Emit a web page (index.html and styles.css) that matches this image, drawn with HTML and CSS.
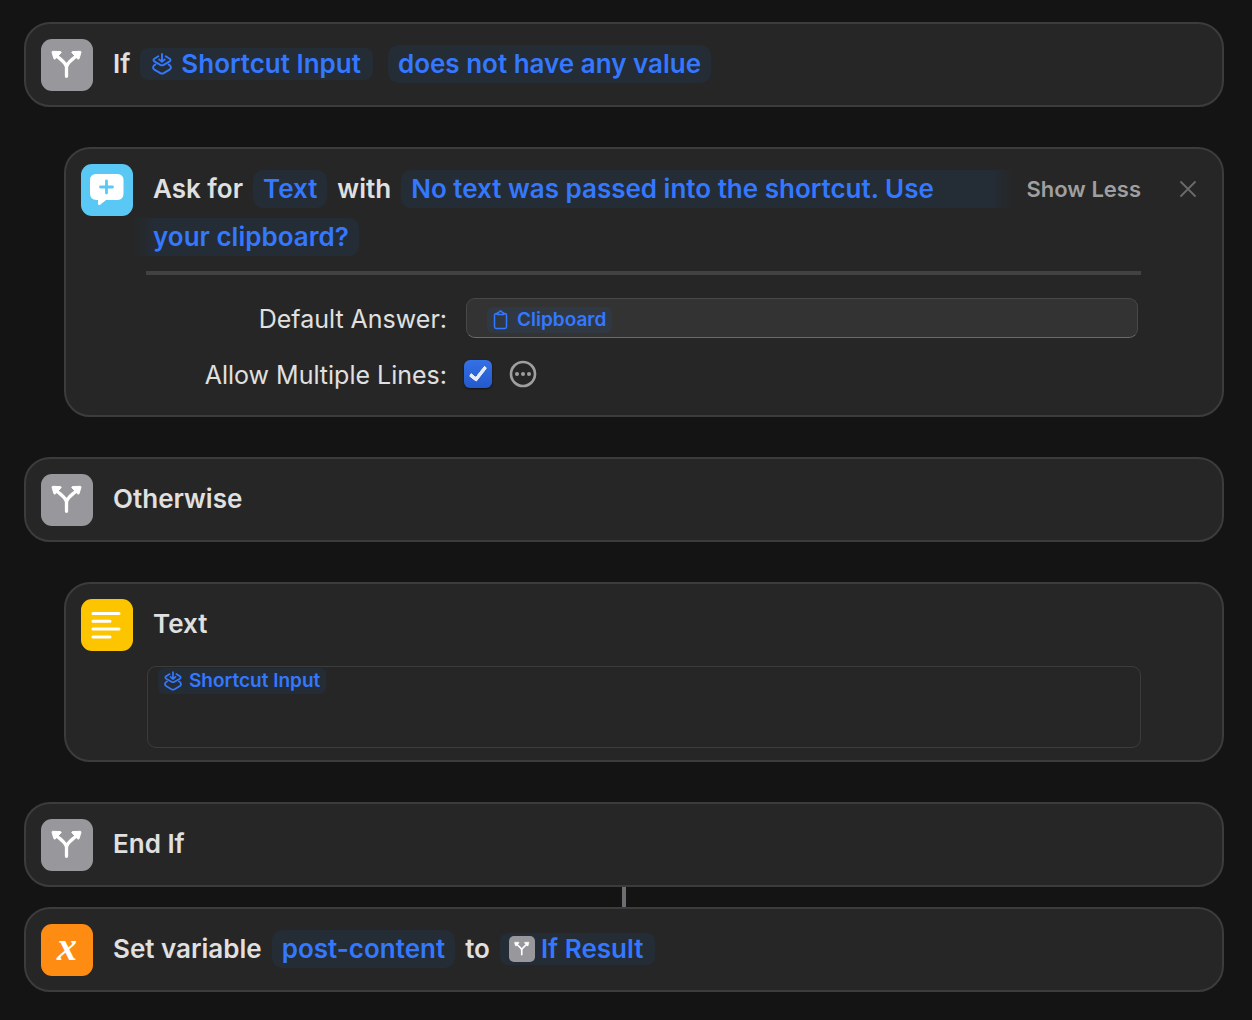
FILE: index.html
```html
<!DOCTYPE html>
<html lang="en">
<head>
  <meta charset="UTF-8">
  <meta name="viewport" content="width=device-width, initial-scale=1.0">
  <title>Shortcut</title>
  <link rel="stylesheet" href="styles.css">
</head>
<body>
<!-- shared icons -->
<svg class="defs" aria-hidden="true">
  <symbol id="branch" viewBox="0 0 52 52">
    <path d="M25.500 37.300V28.500C25.500 23.500 19 20.500 15.500 16.500M25.500 28.500C25.500 23.500 32 20.500 35.500 16.500" fill="none" stroke="#fff" stroke-width="3.300" stroke-linecap="round"/>
    <path d="M11.800 12.300L19.500 12.600Q20.600 12.800 20 13.800L14.300 20Q13.300 20.600 12.900 19.500L11 13.200Q11 12.300 11.800 12.300ZM39.200 12.300L31.500 12.600Q30.400 12.800 31 13.800L36.700 20Q37.700 20.600 38.100 19.500L40 13.200Q40 12.300 39.200 12.300Z" fill="#fff" stroke="#fff" stroke-linejoin="round"/>
  </symbol>
  <symbol id="shortcut" viewBox="0 0 20 22">
    <g fill="none" stroke="currentColor" stroke-width="1.900" stroke-linecap="round" stroke-linejoin="round">
      <path d="M6.300 3.300L2.300 5.700Q.600 7 2.300 8.400L8.300 11.800Q10 12.700 11.700 11.800L17.700 8.400Q19.400 7 17.700 5.700L13.700 3.300"/>
      <path d="M3.400 11.400L2 12.500Q.700 14 1.300 15.400Q1.500 16 2.300 16.600L8.300 20.100Q10 21 11.700 20.100L17.700 16.600Q18.500 16 18.700 15.400Q19.300 14 18 12.500L16.600 11.400"/>
      <path d="M10 1V8.600M7.200 6.400L10 8.900L12.800 6.400"/>
    </g>
  </symbol>
</svg>

<main class="actions">
  <section class="card">
    <svg class="icon gray"><use href="#branch"/></svg>
    <div class="title">
      <span>If</span>
      <button type="button" class="token variable"><svg class="shortcut-icon"><use href="#shortcut"/></svg>Shortcut Input</button>
      <button type="button" class="token condition">does not have any value</button>
    </div>
  </section>

  <section class="card nested">
    <svg class="icon cyan" viewBox="0 0 52 52">
      <path d="M15 10H36.500Q42.500 10 42.500 16.500V29.500Q42.500 36 36.500 36H25L19.500 40.500Q17.200 42 17 39.500V36H15.500Q9 36 9 29.500V16.500Q9 10 15 10Z" fill="#fff"/>
      <path d="M25.500 17V29M19.500 23H31.500" stroke="#5ac8f5" stroke-width="2.800" stroke-linecap="round"/>
    </svg>
    <div class="content">
      <div class="head">
        <div class="title">
          <span>Ask for</span>
          <button type="button" class="token">Text</button>
          <span>with</span>
          <button type="button" class="prompt">
            <span class="token fade-end">No text was passed into the shortcut. Use</span>
            <span class="token fade-start">your clipboard?</span>
          </button>
        </div>
        <button type="button" class="toggle">Show Less</button>
      </div>
      <div class="options">
        <label for="answer">Default Answer:</label>
        <div class="field">
          <button type="button" class="token small">
            <svg class="clip-icon" viewBox="0 0 14 20"><path d="M4.500 3.500H2.700Q1 3.500 1 5.200V16.800Q1 18.500 2.700 18.500H11.300Q13 18.500 13 16.800V5.200Q13 3.500 11.300 3.500H9.500M3.500 4.500Q3.500 2.600 5.300 2.600Q5.500 1 7 1Q8.500 1 8.700 2.600Q10.500 2.600 10.500 4.500Z" fill="none" stroke="currentColor" stroke-width="1.500" stroke-linejoin="round"/></svg>Clipboard</button>
          <input type="text" id="answer">
        </div>
        <label for="multi">Allow Multiple Lines:</label>
        <div class="choice">
          <input type="checkbox" id="multi" checked>
          <button type="button" class="more" aria-label="More">
            <svg viewBox="0 0 28 28"><circle cx="14" cy="14" r="12" fill="none" stroke="#9f9f9f" stroke-width="2.600"/><circle cx="8" cy="14" r="2" fill="#9f9f9f"/><circle cx="14" cy="14" r="2" fill="#9f9f9f"/><circle cx="20" cy="14" r="2" fill="#9f9f9f"/></svg>
          </button>
        </div>
      </div>
    </div>
    <button type="button" class="close" aria-label="Remove">
      <svg viewBox="0 0 16 16"><path d="M1 1L15 15M15 1L1 15" stroke="#6a6a6a" stroke-width="1.800" stroke-linecap="round"/></svg>
    </button>
  </section>

  <section class="card">
    <svg class="icon gray"><use href="#branch"/></svg>
    <div class="title"><span>Otherwise</span></div>
  </section>

  <section class="card nested text-card">
    <svg class="icon yellow" viewBox="0 0 52 52">
      <path d="M12 14.500H38M12 22.300H29M12 30.100H38M12 37.900H29" stroke="#fff" stroke-width="3" stroke-linecap="round"/>
    </svg>
    <div class="content">
      <div class="title"><label for="text">Text</label></div>
      <div class="text-box">
        <button type="button" class="token small"><svg class="shortcut-icon"><use href="#shortcut"/></svg>Shortcut Input</button>
        <textarea id="text"></textarea>
      </div>
    </div>
  </section>

  <section class="card">
    <svg class="icon gray"><use href="#branch"/></svg>
    <div class="title"><span>End If</span></div>
  </section>

  <section class="card linked">
    <div class="icon orange">x</div>
    <div class="title">
      <span>Set variable</span>
      <button type="button" class="token">post-content</button>
      <span>to</span>
      <button type="button" class="token variable result"><svg class="mini gray"><use href="#branch"/></svg>If Result</button>
    </div>
  </section>
</main>
</body>
</html>
```
FILE: styles.css
```css
* {
  box-sizing: border-box;
}
body {
  margin: 0;
  padding: 22px 28px 28px 24px;
  background: #141414;
  color: #e0e0e0;
  font-family: Inter, "Liberation Sans", sans-serif;
  font-size: 26px;
}
button {
  padding: 0;
  border: 0;
  background: none;
  color: inherit;
  font: inherit;
  cursor: pointer;
}
svg {
  display: block;
  flex: none;
}
.defs {
  position: absolute;
  width: 0;
  height: 0;
}
.actions {
  display: flex;
  flex-direction: column;
  gap: 40px;
}
.card {
  position: relative;
  display: flex;
  align-items: flex-start;
  gap: 20px;
  padding: 15px 15px 14px;
  background: #262626;
  border: 2px solid #3c3c3c;
  border-radius: 26px;
}
.nested {
  margin-left: 40px;
  padding-right: 81px;
}
.linked {
  margin-top: -20px;
}
/* connector to the previous action */
.linked::before {
  content: "";
  position: absolute;
  left: 50%;
  bottom: 100%;
  width: 4px;
  height: 20px;
  margin: 0 0 2px -2px;
  background: #6c6e72;
}
.icon {
  flex: none;
  width: 52px;
  height: 52px;
  border-radius: 11px;
}
.gray {
  background: #98979c;
}
.cyan {
  background: #5ac8f5;
}
.yellow {
  background: #fdc500;
}
.orange {
  background: #ff8c12;
  color: #fff;
  font: italic bold 40px/46px "Liberation Serif", serif;
  text-align: center;
}
.title {
  display: flex;
  flex-wrap: wrap;
  align-items: center;
  column-gap: 10px;
  padding-top: 1px;
  line-height: 48px;
  font-weight: 600;
}
.content {
  flex: 1;
  min-width: 0;
}
.token {
  display: flex;
  align-items: center;
  height: 38px;
  padding: 0 10px;
  background: #242c35;
  border-radius: 10px;
  color: #3478ff;
  font-weight: 600;
  line-height: 38px;
  white-space: nowrap;
}
.variable {
  height: 32px;
  padding: 0 12px;
  gap: 9px;
  border-radius: 8px;
}
.condition {
  margin-left: 5px;
}
.result {
  padding-left: 9px;
  gap: 6px;
}
.shortcut-icon {
  width: 20px;
  height: 22px;
}
.mini {
  width: 26px;
  height: 26px;
  border-radius: 5px;
}
.head {
  display: flex;
  align-items: flex-start;
  gap: 14px;
}
.head .title {
  flex: 1;
}
/* one prompt broken over two lines, fading where it breaks */
.prompt {
  display: contents;
}
.fade-end {
  flex: 1;
  border-radius: 10px 0 0 10px;
  background: linear-gradient(to left, #262626, #242c35 20px);
}
.fade-start {
  margin: 5px 0 5px -20px;
  padding-left: 20px;
  border-radius: 0 10px 10px 0;
  background: linear-gradient(to right, #262626, #242c35 20px);
}
.toggle {
  padding-top: 1px;
  color: #9f9f9f;
  font-size: 22px;
  font-weight: 600;
  line-height: 48px;
}
.close {
  position: absolute;
  top: 32px;
  right: 26px;
}
.close svg {
  width: 16px;
  height: 16px;
}
.options {
  display: grid;
  grid-template-columns: 301px 1fr;
  align-items: center;
  gap: 16px 19px;
  margin: 10px 0 0 -7px;
  padding: 23px 3px 7px 0;
  border-top: 4px solid #424242;
}
.options label {
  padding-top: 2px;
  font-size: 25px;
  line-height: 38px;
  text-align: right;
}
.field {
  display: flex;
  align-items: center;
  height: 40px;
  padding: 4px 20px 0;
  background: #333;
  border: 1px solid #484848;
  border-bottom-color: #6c6c6c;
  border-radius: 9px;
}
.small {
  height: 26px;
  padding: 0 6px;
  gap: 7px;
  border-radius: 6px;
  font-size: 19px;
  line-height: 26px;
}
.field .small {
  gap: 9px;
  background: #2f3843;
}
.small .shortcut-icon {
  width: 18px;
  height: 20px;
}
.clip-icon {
  width: 15px;
  height: 20px;
}
.field input,
.text-box textarea {
  flex: 1;
  min-width: 0;
  padding: 0;
  border: 0;
  outline: 0;
  background: none;
  color: inherit;
  font: inherit;
  font-size: 19px;
  resize: none;
}
.choice {
  display: flex;
  align-items: center;
  gap: 17px;
}
.choice input {
  appearance: none;
  width: 28px;
  height: 28px;
  margin: 0 0 0 -2px;
  border-radius: 6px;
  background: linear-gradient(#3470e6, #2459cc);
  box-shadow: 0 1px 2px #111;
}
.choice input:checked::before {
  content: "";
  display: block;
  width: 6px;
  height: 14px;
  margin: 3px 0 0 9px;
  border: solid #e4ebfb;
  border-width: 0 4px 4px 0;
  border-radius: 2px;
  transform: rotate(38deg);
}
.more svg {
  width: 28px;
  height: 28px;
}
.text-card {
  padding-bottom: 12px;
}
.text-box {
  display: flex;
  align-items: flex-start;
  height: 82px;
  margin: 18px 0 0 -6px;
  padding: 1px 10px;
  border: 1px solid #3c3c3c;
  border-radius: 9px;
}
.text-box textarea {
  height: 76px;
}
```
